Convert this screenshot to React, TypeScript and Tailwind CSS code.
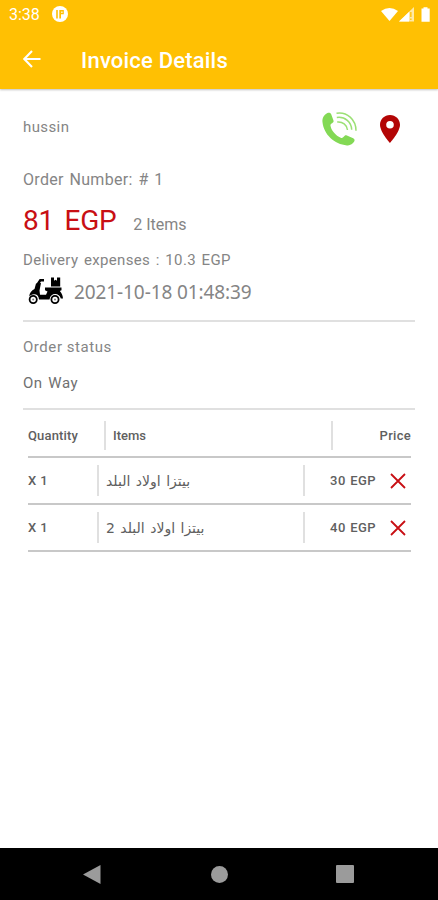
const items = [
  { name: "بيتزا اولاد البلد", price: "30 EGP" },
  { name: "بيتزا اولاد البلد 2", price: "40 EGP" },
];

const StatusBar = () => {
  return (
    <div className="flex h-7 items-center pl-[9px] pr-2 text-white">
      <span className="w-[43px] pt-px text-[16px] leading-none">3:38</span>
      <svg className="size-4" viewBox="0 0 16 16">
        <circle cx="8" cy="8" r="8" fill="#fff" />
        <path d="M4.2 4h1.6v8.5H4.2zM7.3 4h4.5v4.3H9v4.2H7.3z" fill="#ffc003" />
        <path d="M9.3 5.5h1.2v1.4H9.3z" fill="#fff" />
      </svg>
      <svg className="ml-auto h-[15px] w-[49px]" viewBox="0 0 49 15" fill="#fff">
        <path d="M0 4Q8.5-2 17 4L8.5 14Z" />
        <path d="M18 14.5 33 0v14.5Z" opacity=".65" />
        <path d="M18 14.5 28 5v9.5Z" />
        <path d="M29.2 5h1.3v5h-1.3zM29.2 11.5h1.3v1.5h-1.3z" fill="#ffc003" />
        <path d="M40.5 1.5h2V.3h4v1.2h2.2v13.2h-8.2z" />
      </svg>
    </div>
  );
};

const PhoneIcon = () => {
  return (
    <svg className="h-[34px] w-[35px]" viewBox="0 0 35 34" fill="none">
      <path
        d="M5 1.2C7 .3 8.5.7 9.2 2.2l2.2 6.1c.5 1.4 0 2.2-1.3 2.9-1.5.7-1.9 1.4-1.5 3 .9 4.5 5.1 9.3 10.1 11.5 1.3.5 2.3.2 3-.9 1-1.5 1.8-1.9 3.2-1.3l6.3 2.8c1.5.8 1.8 1.8 1 3.3-1.5 2.7-4.2 4.2-7.2 3.8C12.3 32.2 1.8 22.4.5 10.2 0 6.2 2 2.7 5 1.2Z"
        fill="#83d955"
      />
      <path
        d="M14.5 1.2C25-.5 34 7.5 34 18.8M14.8 5.5c8.3-1.2 14.7 4.8 14.9 12.3M15.2 10c5.3-.7 9.9 3 10.3 8"
        stroke="#9be075"
        strokeWidth="1.5"
      />
    </svg>
  );
};

const ScooterIcon = () => {
  return (
    <svg className="h-7 w-[35px]" viewBox="0 0 35 28" fill="none">
      <path d="M23 .5h3v3.3l1.5-1L29 3.800V.5h3.200V9.500H23Z" fill="#000" />
      <path d="M16 3.300h-3.700L9.500 7.500" stroke="#000" strokeWidth="2.400" />
      <path d="M8 6.500 13 6l-1.500 7.500.5 4.300h6l1.500-3.300-2.500-1.300v-2.700h16.500v2.800l-1.700.8c1.800 1.800 2.900 4.200 3.200 7.300h-2.200c-.8-2.700-2.800-4.300-5.600-4.300-3 0-5.200 2-5.700 5.400H11c-.2-3.500-2-5.300-5-5.300-2.200 0-3.800.9-4.800 2.400C1.400 16 3.600 13.300 6.500 12Z" fill="#000" />
      <circle cx="5.200" cy="22.500" r="3.600" fill="#fff" stroke="#000" strokeWidth="1.800" />
      <circle cx="27" cy="22.500" r="3.600" fill="#fff" stroke="#000" strokeWidth="1.800" />
      <circle cx="5.200" cy="22.500" r="1" fill="#777" />
      <circle cx="27" cy="22.500" r="1" fill="#777" />
    </svg>
  );
};

const App = () => {
  return (
    <div className="flex h-[900px] w-[438px] flex-col overflow-hidden bg-white font-[Roboto,sans-serif] text-[#858585]">
      <header className="h-[89px] shrink-0 bg-[#ffc003] shadow-[0_1px_2px_rgba(0,0,0,0.25)]">
        <StatusBar />
        <div className="flex h-[62px] items-center pl-[23px] text-white">
          <svg className="size-[18px]" viewBox="0 0 18 18" fill="none" stroke="#fff" strokeWidth="2.1">
            <path d="M17.5 9H1.5M9 1 1.3 9 9 17" />
          </svg>
          <h1 className="ml-10 pt-[3px] text-[22px] font-medium leading-none tracking-[0.2px]">Invoice Details</h1>
        </div>
      </header>

      <main className="flex-1 px-[23px]">
        <div className="flex h-[77px] items-center">
          <span className="text-[15px] tracking-[0.4px]">hussin</span>
          <div className="ml-auto mr-[15px] flex items-center gap-[23px] pt-[3px]">
            <PhoneIcon />
            <svg className="h-7 w-5" viewBox="0 0 20 28">
              <path d="M10 0C4.4 0 0 4.3 0 9.8 0 17 10 28 10 28s10-11 10-18.2C20 4.3 15.6 0 10 0Zm0 13.5a3.8 3.8 0 1 1 0-7.6 3.8 3.8 0 0 1 0 7.6Z" fill="#b30505" />
            </svg>
          </div>
        </div>
        <p className="flex h-[28px] items-center text-[16px] tracking-[0.3px] [word-spacing:1.5px]">Order Number: # 1</p>
        <div className="flex h-[54px] items-center">
          <span className="text-[28px] tracking-[-0.3px] text-[#c80f14] [word-spacing:4px]">81 EGP</span>
          <span className="ml-[17px] pt-[8px] text-[16px]">2 Items</span>
        </div>
        <p className="flex h-[25px] items-center text-[15px] tracking-[0.35px] [word-spacing:1.5px]">Delivery expenses : 10.3 EGP</p>
        <div className="flex h-[49px] border-b-2 border-[#e0e0e0] pl-[5px] pt-1">
          <ScooterIcon />
          <span className="ml-[11px] font-['Noto_Sans'] text-[19px] leading-[31px] tracking-[-0.1px]">2021-10-18 01:48:39</span>
        </div>
        <p className="mt-[9px] flex h-8 items-center text-[15px] tracking-[0.55px]">Order status</p>
        <div className="flex h-[47px] items-center border-b-2 border-[#e0e0e0] pb-[5px] text-[15px] tracking-[0.5px] text-[#707070] [word-spacing:1.5px]">On Way</div>

        <div className="ml-[5px] mr-1 text-[13px] font-medium text-[#606060]">
          <div className="flex h-12 items-center border-b-2 border-[#c8c8c8]">
            <span className="w-[76px] pt-[5px] tracking-[0.15px]">Quantity</span>
            <div className="mt-1 flex h-[29px] w-[229px] items-center border-x-2 border-[#e0e0e0] pl-[7px] pt-px">Items</div>
            <span className="ml-auto pt-[5px] tracking-[0.3px]">Price</span>
          </div>
          {items.map((item) => (
            <div className="flex h-[47px] items-center border-b-2 border-[#c8c8c8]" key={item.name}>
              <span className="w-[69px] tracking-[0.4px]">X 1</span>
              <div className="flex h-[31px] w-[208px] items-center border-x-2 border-[#e0e0e0] pl-[7px]">
                <span dir="rtl" className="whitespace-nowrap font-['DejaVu_Sans'] text-[14px] font-normal leading-none [word-spacing:1px]">{item.name}</span>
              </div>
              <span className="ml-auto tracking-[0.4px] [word-spacing:1px]">{item.price}</span>
              <svg className="ml-3.5 mr-[5px] size-4" viewBox="0 0 16 16" fill="none" stroke="#c80f14" strokeWidth="1.8">
                <path d="m1 1 14 14M15 1 1 15" />
              </svg>
            </div>
          ))}
        </div>
      </main>

      <nav className="flex h-[52px] shrink-0 items-center bg-black pl-[83px] pr-[84px]">
        <svg className="h-[19px] w-[18px]" viewBox="0 0 18 19" fill="#9b9b9b">
          <path d="M0 9.5 17.5 0v19Z" />
        </svg>
        <div className="ml-[110px] size-[17px] rounded-full bg-[#9b9b9b]"></div>
        <div className="ml-auto size-[18px] rounded-[1px] bg-[#9b9b9b]"></div>
      </nav>
    </div>
  );
};

export default App;
